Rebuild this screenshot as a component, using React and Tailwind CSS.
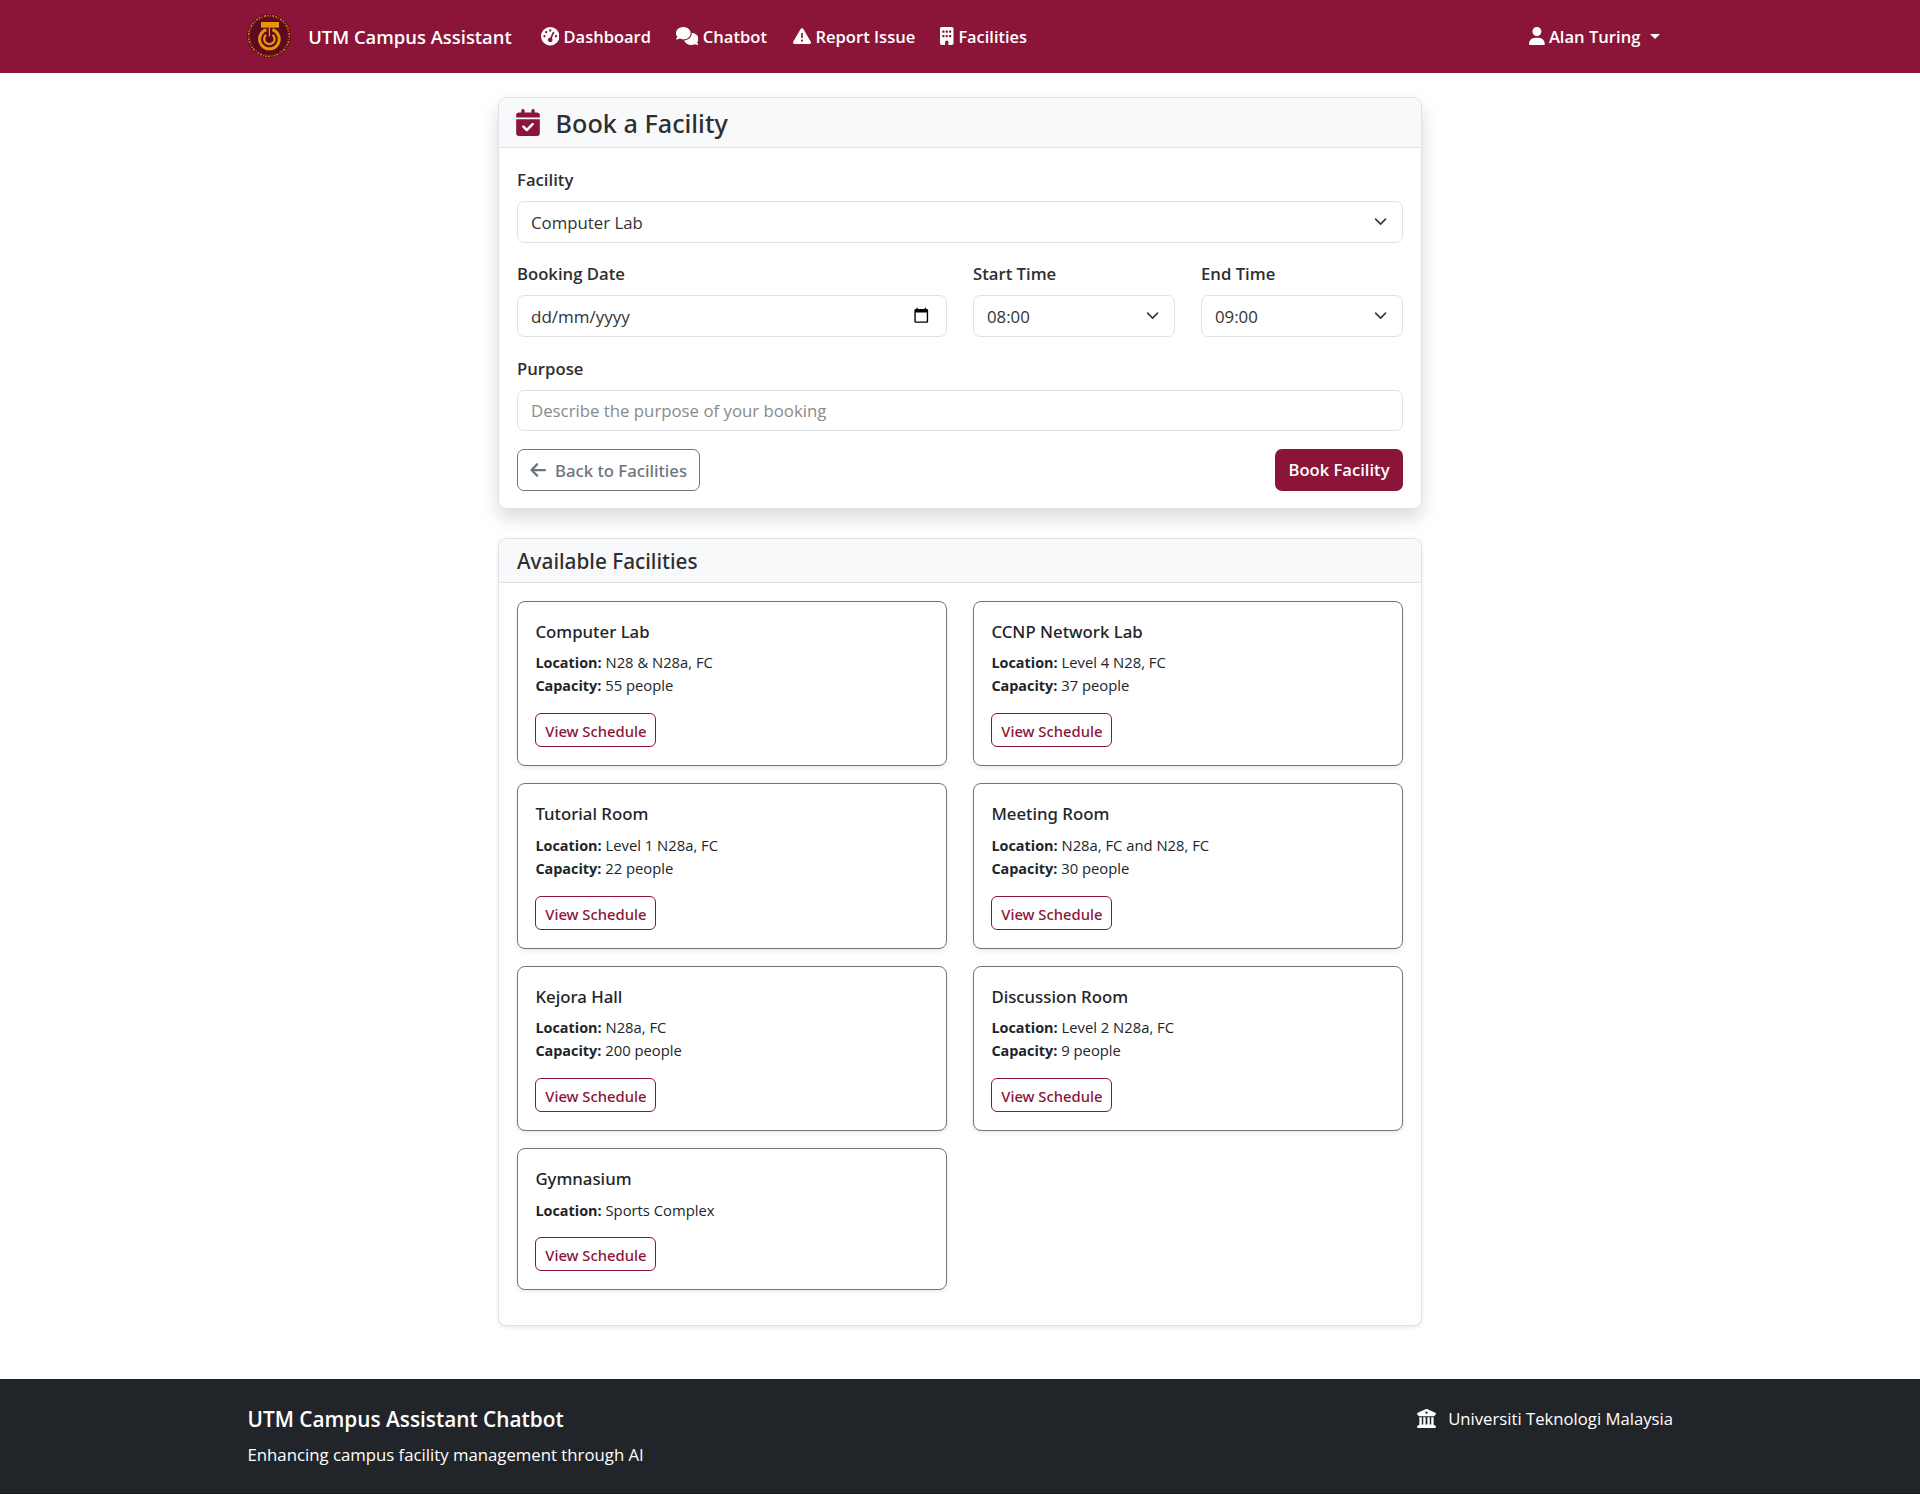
import React from "react";
import {
  FaGaugeHigh,
  FaComments,
  FaTriangleExclamation,
  FaBuilding,
  FaUser,
  FaCalendarCheck,
  FaArrowLeft,
  FaBuildingColumns,
} from "react-icons/fa6";

const facilities = [
  { name: "Computer Lab", location: "N28 & N28a, FC", capacity: "55 people" },
  { name: "CCNP Network Lab", location: "Level 4 N28, FC", capacity: "37 people" },
  { name: "Tutorial Room", location: "Level 1 N28a, FC", capacity: "22 people" },
  { name: "Meeting Room", location: "N28a, FC and N28, FC", capacity: "30 people" },
  { name: "Kejora Hall", location: "N28a, FC", capacity: "200 people" },
  { name: "Discussion Room", location: "Level 2 N28a, FC", capacity: "9 people" },
  { name: "Gymnasium", location: "Sports Complex" },
];

function Logo() {
  return (
    <svg viewBox="0 0 44 44" className="mb-px h-11 w-11 shrink-0">
      <circle cx="22" cy="22" r="22" fill="#5c0a1e" />
      <circle cx="22" cy="22" r="20.4" fill="none" stroke="#e8930c" strokeWidth="1.5" strokeDasharray="1.6 1.3 0.8 1.5 2.2 1.1" opacity="0.85" />
      <circle cx="22" cy="22" r="19.2" fill="none" stroke="#e8930c" strokeWidth="0.8" strokeDasharray="1 2.2 0.7 1.8" opacity="0.6" />
      <rect x="14" y="8" width="18" height="5.6" fill="#e8930c" />
      <path d="M22.4 13.5v9" stroke="#e8930c" strokeWidth="1.3" />
      <path d="M19.4 15.7A9.8 9.8 0 1 0 25.4 15.7" fill="none" stroke="#e8930c" strokeWidth="3" />
      <path d="M19.2 20.9A5.2 5.2 0 1 0 25.6 20.9" fill="none" stroke="#e8930c" strokeWidth="2.3" />
    </svg>
  );
}

function Chevron() {
  return (
    <svg viewBox="0 0 16 16" className="h-[13.2px] w-[13.2px]" fill="none" stroke="#343a40" strokeWidth="2" strokeLinecap="round" strokeLinejoin="round">
      <path d="m2 5 6 6 6-6" />
    </svg>
  );
}

function Label({ children, className = "" }) {
  return (
    <label className={`mb-[9px] block h-[26.5px] pt-px text-[16.7px] leading-[26.5px] font-semibold text-[#2f2f2f] ${className}`}>
      {children}
    </label>
  );
}

function Select({ value }) {
  return (
    <div className="flex h-[42px] items-center justify-between rounded-[7px] border border-[#dee2e6] bg-white pr-[15px] pl-[13px]">
      <span className="pt-px text-[16.8px] leading-6 text-[#333]">{value}</span>
      <Chevron />
    </div>
  );
}

function FacilityCard({ name, location, capacity }) {
  return (
    <div className="self-start rounded-[8px] border border-[#6c757d] bg-white px-[17.4px] pt-[17.8px] pb-[18px] shadow-[0_2px_4px_rgba(139,21,56,0.1)]">
      <h3 className="mb-[7.3px] text-[16.8px] leading-6 font-medium text-[#212529] font-['Noto_Sans',sans-serif]">{name}</h3>
      <div className="text-[14.8px] leading-[23.1px] text-[#212529]">
        <p>
          <strong className="text-[14.4px] font-bold">Location:</strong> {location}
        </p>
        {capacity && (
          <p>
            <strong className="text-[14.4px] font-bold">Capacity:</strong> {capacity}
          </p>
        )}
      </div>
      <button className="mt-[15.8px] flex h-[34px] w-[121px] items-center justify-center rounded-[6px] border border-[#8a1538] pt-[2px] text-[14.8px] leading-5 font-medium text-[#8a1538] font-['Noto_Sans',sans-serif]">
        View Schedule
      </button>
    </div>
  );
}

export default function App() {
  return (
    <div className="flex h-[1494px] w-[1920px] flex-col bg-white font-['Open_Sans','Noto_Sans',sans-serif]">
      <nav className="flex h-[73px] shrink-0 items-center bg-[#8a1538] pr-[260px] pl-[247px] text-[16.6px] font-semibold text-white">
        <Logo />
        <span className="ml-[17.2px] w-[232.8px] pt-px text-[18.4px] whitespace-nowrap">UTM Campus Assistant</span>
        <a className="flex w-[135px] items-center gap-[4px]">
          <FaGaugeHigh className="h-[18.5px] w-[18.5px]" />
          <span className="pt-[1.5px] text-[16.5px]">Dashboard</span>
        </a>
        <a className="flex w-[117px] items-center gap-[4.3px]">
          <FaComments className="h-[18px] w-[22.5px]" />
          <span className="pt-[1.5px]">Chatbot</span>
        </a>
        <a className="flex w-[147.5px] items-center gap-[4.4px]">
          <FaTriangleExclamation className="h-[18px] w-[18px]" />
          <span className="pt-[1.5px]">Report Issue</span>
        </a>
        <a className="flex items-center gap-[4.4px]">
          <FaBuilding className="h-[18px] w-[13.5px]" />
          <span className="pt-[1.5px] text-[16.4px]">Facilities</span>
        </a>
        <a className="ml-auto flex items-center">
          <FaUser className="mr-[3.6px] h-[18px] w-[15.8px]" />
          <span className="pt-[1.5px]">Alan Turing</span>
          <svg viewBox="0 0 10 5" className="ml-[9.6px] h-[5px] w-[10px]" fill="#fff">
            <path d="M0 0h10L5 5z" />
          </svg>
        </a>
      </nav>

      <main className="mx-auto mt-6 w-[924px]">
        <section className="rounded-[8px] border border-[#dee2e6] bg-white shadow-[0_9px_18px_rgba(0,0,0,0.15)]">
          <header className="flex h-[50px] items-center rounded-t-[7px] border-b border-[#dee2e6] bg-[#f8f9fb] px-[17px]">
            <FaCalendarCheck className="h-[27px] w-[24px] text-[#8a1538]" />
            <h1 className="ml-[15.6px] pt-[3px] text-[25.2px] font-medium text-[#2f2f2f] font-['Noto_Sans',sans-serif]">Book a Facility</h1>
          </header>
          <div className="px-[18px] pt-[17.5px] pb-[17px]">
            <Label>Facility</Label>
            <Select value="Computer Lab" />
            <div className="mt-[16.5px] grid grid-cols-[430px_202px_202px] gap-[26px]">
              <div>
                <Label>Booking Date</Label>
                <div className="flex h-[42px] items-center justify-between rounded-[7px] border border-[#dee2e6] pr-[17px] pl-[13px]">
                  <span className="pt-px text-[17px] leading-6 text-[#333]">dd/mm/yyyy</span>
                  <svg viewBox="0 0 24 24" className="mb-[2px] h-[16.5px] w-[16.5px]" fill="#000">
                    <path d="M20 3h-1V1h-2v2H7V1H5v2H4c-1.1 0-2 .9-2 2v16c0 1.1.9 2 2 2h16c1.1 0 2-.9 2-2V5c0-1.1-.9-2-2-2zm0 18H4V8h16v13z" />
                  </svg>
                </div>
              </div>
              <div>
                <Label>Start Time</Label>
                <Select value="08:00" />
              </div>
              <div>
                <Label>End Time</Label>
                <Select value="09:00" />
              </div>
            </div>
            <Label className="mt-[17.5px]">Purpose</Label>
            <div className="flex h-[41px] items-center rounded-[7px] border border-[#dee2e6] pl-[13px]">
              <span className="text-[16.8px] leading-6 text-[#8a8a8a]">Describe the purpose of your booking</span>
            </div>
            <div className="mt-[18px] flex justify-between">
              <button className="flex h-[42px] w-[183px] items-center rounded-[7px] border border-[#6c757d] pl-3 text-[16.7px] leading-6 font-medium whitespace-nowrap text-[#6c757d] font-['Noto_Sans',sans-serif]">
                <FaArrowLeft className="mr-[8.6px] h-[18px] w-[16.5px]" />
                <span className="pt-[1.5px]">Back to Facilities</span>
              </button>
              <button className="h-[42px] w-[128px] rounded-[7px] bg-[#8a1538] pt-[1.5px] text-[16.6px] font-semibold text-white">Book Facility</button>
            </div>
          </div>
        </section>

        <section className="mt-[29px] h-[788px] rounded-[8px] border border-[#dee2e6] bg-white shadow-[0_2px_4px_rgba(139,21,56,0.1)]">
          <header className="flex h-[44px] items-center rounded-t-[7px] border-b border-[#dee2e6] bg-[#f8f9fb] px-[18px]">
            <h2 className="pt-[2.5px] text-[20.75px] font-medium text-[#2f2f2f] font-['Noto_Sans',sans-serif]">Available Facilities</h2>
          </header>
          <div className="grid grid-cols-2 gap-x-[26px] gap-y-[17.4px] px-[18px] pt-[18px]">
            {facilities.map((f) => (
              <FacilityCard key={f.name} {...f} />
            ))}
          </div>
        </section>
      </main>

      <footer className="mt-[53px] flex flex-1 justify-between border-b border-[#15181b] bg-[#212529] pt-[27px] pr-[247px] pl-[247.5px] text-white">
        <div>
          <h2 className="text-[20.8px] leading-[27px] font-semibold">UTM Campus Assistant Chatbot</h2>
          <p className="mt-[8px] text-[16.75px] leading-[27px]">Enhancing campus facility management through AI</p>
        </div>
        <div className="flex h-[25px] items-center text-[16.7px]">
          <FaBuildingColumns className="mr-[12.5px] h-[19px] w-[19px]" />
          Universiti Teknologi Malaysia
        </div>
      </footer>
    </div>
  );
}
